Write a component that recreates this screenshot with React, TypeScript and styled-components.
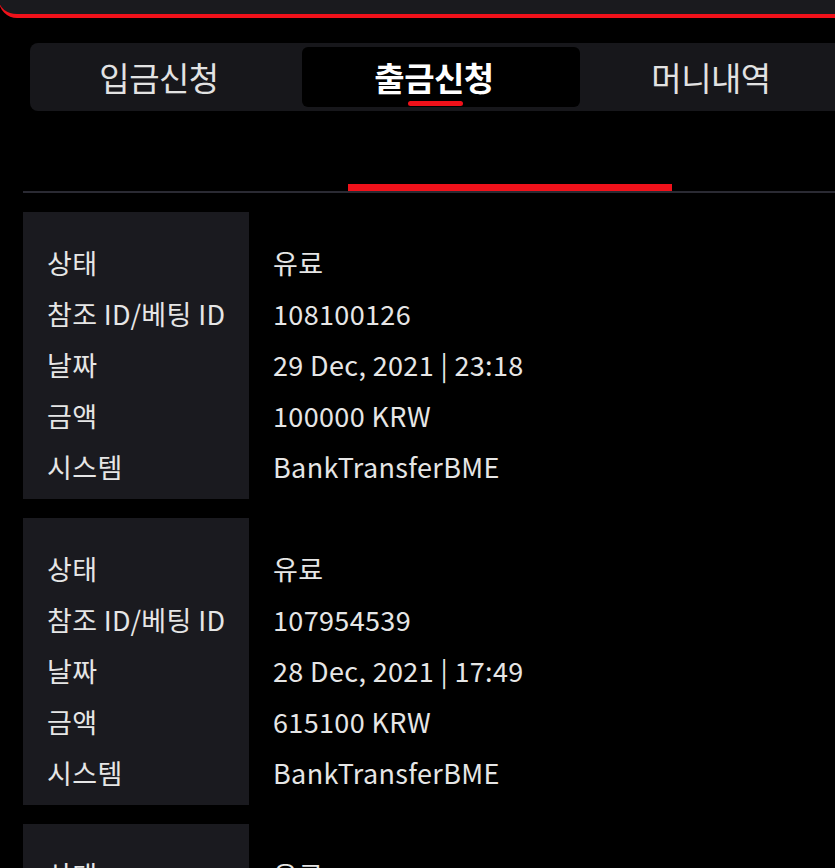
import { FC } from "react";
import styled, { createGlobalStyle } from "styled-components";

const GlobalStyle = createGlobalStyle`
  html, body {
    margin: 0;
    padding: 0;
    background: #000;
    overflow: hidden;
  }
  body {
    font-family: "Noto Sans CJK KR", "Noto Sans", sans-serif;
    color: #e6e6e6;
  }
`;

interface Record {
  status: string;
  ref: string;
  date: string;
  amount: string;
  system: string;
}

const records: Record[] = [
  {
    status: "유료",
    ref: "108100126",
    date: "29 Dec, 2021 | 23:18",
    amount: "100000 KRW",
    system: "BankTransferBME",
  },
  {
    status: "유료",
    ref: "107954539",
    date: "28 Dec, 2021 | 17:49",
    amount: "615100 KRW",
    system: "BankTransferBME",
  },
  {
    status: "유료",
    ref: "107811204",
    date: "27 Dec, 2021 | 12:05",
    amount: "300000 KRW",
    system: "BankTransferBME",
  },
];

// width and right padding (to nudge the label) for each tab
const tabs = [
  { label: "입금신청", width: 268, shift: 18 },
  { label: "출금신청", width: 278, shift: 14 },
  { label: "머니내역", width: 262, shift: 0 },
];

const App: FC = () => {
  return (
    <Page>
      <GlobalStyle />
      <TopBar />
      <TabBar>
        {tabs.map((t, i) => (
          <Tab key={t.label} $active={i === 1} $width={t.width} $shift={t.shift}>
            {t.label}
          </Tab>
        ))}
      </TabBar>
      <SubTabs>
        <Indicator />
      </SubTabs>
      <List>
        {records.map((r) => (
          <Card key={r.ref}>
            <Labels>
              <Cell>상태</Cell>
              <Cell>참조 ID/베팅 ID</Cell>
              <Cell>날짜</Cell>
              <Cell>금액</Cell>
              <Cell>시스템</Cell>
            </Labels>
            <Values>
              <Cell>{r.status}</Cell>
              <Cell>{r.ref}</Cell>
              <Cell>{r.date}</Cell>
              <Cell>{r.amount}</Cell>
              <Cell>{r.system}</Cell>
            </Values>
          </Card>
        ))}
      </List>
    </Page>
  );
};

const Page = styled.div`
  width: 835px;
  height: 868px;
  overflow: hidden;
  background: #000;
`;

const TopBar = styled.div`
  height: 14px;
  margin-left: -1px;
  background: #1a1a1e;
  border-bottom: 4px solid #f0111a;
  border-bottom-left-radius: 18px;
`;

const TabBar = styled.div`
  display: flex;
  margin: 25px 0 0 30px;
  width: 860px;
  height: 68px;
  box-sizing: border-box;
  padding: 4px;
  background: #17171b;
  border-radius: 8px;
`;

const Tab = styled.div<{ $active?: boolean; $width: number; $shift: number }>`
  position: relative;
  flex: 0 0 ${(p) => p.$width}px;
  box-sizing: border-box;
  display: flex;
  align-items: center;
  justify-content: center;
  padding-right: ${(p) => p.$shift}px;
  font-size: 33px;
  font-weight: ${(p) => (p.$active ? 700 : 400)};
  color: ${(p) => (p.$active ? "#ffffff" : "#e2e2e2")};
  background: ${(p) => (p.$active ? "#000" : "transparent")};
  border-radius: 6px;
  letter-spacing: -0.5px;

  &::after {
    content: "";
    display: ${(p) => (p.$active ? "block" : "none")};
    position: absolute;
    left: 106px;
    bottom: 1px;
    width: 55px;
    height: 5px;
    border-radius: 3px;
    background: #f0111a;
  }
`;

const SubTabs = styled.div`
  height: 80px;
  margin-left: 23px;
  border-bottom: 2px solid #2a2a33;
  display: flex;
  align-items: flex-end;
  padding-left: 325px;
`;

const Indicator = styled.div`
  width: 324px;
  height: 7px;
  background: #f0111a;
`;

const List = styled.div`
  display: flex;
  flex-direction: column;
  gap: 19px;
  margin: 19px 0 0 23px;
`;

const Card = styled.div`
  display: grid;
  grid-template-columns: 226px 1fr;
  height: 287px;
`;

const Labels = styled.div`
  background: #1a1a1f;
  padding: 25px 0 0 24px;
`;

const Values = styled.div`
  padding: 25px 0 0 24px;
`;

const Cell = styled.div`
  height: 51px;
  line-height: 51px;
  font-size: 27px;
  letter-spacing: 0.35px;
  white-space: nowrap;
  color: #e6e6e6;
`;

export default App;
